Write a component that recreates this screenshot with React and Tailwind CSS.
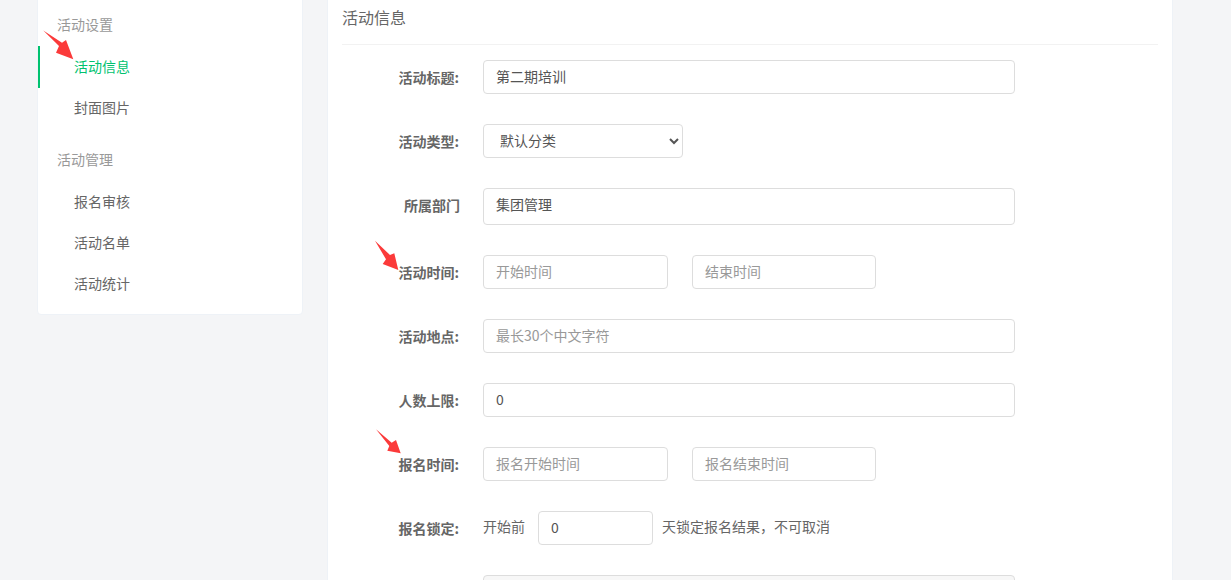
const font = { fontFamily: '"Noto Sans CJK SC", "Liberation Sans", sans-serif' };

const inputClass =
  'h-[34px] rounded border border-[#dddddd] bg-white px-3 pb-[2px] text-sm text-[#555555] placeholder:text-[#999999] outline-none';

function Row({ label, children, className = 'mb-[30px]', labelClass = 'pb-[1px] pr-[1px]' }) {
  return (
    <div className={`flex items-center ${className}`}>
      <label className={`w-[118px] shrink-0 text-right text-sm font-bold text-[#666666] ${labelClass}`}>{label}</label>
      <div className="ml-[23px] flex items-center">{children}</div>
    </div>
  );
}

function SideGroup({ title, items, active }) {
  return (
    <div className="mb-[12px] last:mb-[10px]">
      <div className="flex h-[41px] items-center pb-[4px] pl-[19px] text-sm text-[#999999]">{title}</div>
      {items.map((item) => (
        <div
          key={item}
          className={
            item === active
              ? '-mb-[1px] flex h-[42px] items-center border-l-2 border-[#00c26f] pb-[2px] pl-[34px] text-sm text-[#00c26f]'
              : 'flex h-[41px] items-center pb-[2px] pl-[36px] text-sm text-[#666666]'
          }
        >
          {item}
        </div>
      ))}
    </div>
  );
}

export default function App() {
  return (
    <div className="relative h-[580px] overflow-hidden bg-[#f4f5f7]" style={font}>
      <div className="flex items-start pl-[37px]">
        <aside className="-mt-[6px] w-[266px] shrink-0 rounded-sm border border-[#eef2f7] bg-white pt-[10px]">
          <SideGroup title="活动设置" items={['活动信息', '封面图片']} active="活动信息" />
          <SideGroup title="活动管理" items={['报名审核', '活动名单', '活动统计']} />
        </aside>

        <main className="ml-[24px] -mt-[10px] w-[846px] shrink-0 border border-[#eef2f7] bg-white px-[14px]">
          <div className="flex h-[54px] items-end border-b border-[#f2f2f2] pb-[16px] text-base leading-[22px] text-[#666666]">
            活动信息
          </div>

          <form className="pt-[15px]">
            <Row label="活动标题:">
              <input className={`${inputClass} w-[532px]`} defaultValue="第二期培训" />
            </Row>
            <Row label="活动类型:">
              <select className={`${inputClass} w-[200px]`} defaultValue="默认分类">
                <option>默认分类</option>
              </select>
            </Row>
            <Row label="所属部门" labelClass="pb-[4px]">
              <input className={`${inputClass} h-[37px] w-[532px] pb-[5px]`} defaultValue="集团管理" />
            </Row>
            <Row label="活动时间:">
              <input className={`${inputClass} w-[185px]`} placeholder="开始时间" />
              <input className={`${inputClass} ml-[24px] w-[184px]`} placeholder="结束时间" />
            </Row>
            <Row label="活动地点:">
              <input className={`${inputClass} w-[532px]`} placeholder="最长30个中文字符" />
            </Row>
            <Row label="人数上限:">
              <input className={`${inputClass} w-[532px]`} defaultValue="0" />
            </Row>
            <Row label="报名时间:">
              <input className={`${inputClass} w-[185px]`} placeholder="报名开始时间" />
              <input className={`${inputClass} ml-[24px] w-[184px]`} placeholder="报名结束时间" />
            </Row>
            <Row label="报名锁定:">
              <span className="-mt-[4px] text-sm text-[#666666]">开始前</span>
              <input className={`${inputClass} ml-[13px] mr-[9px] w-[115px]`} defaultValue="0" />
              <span className="-mt-[4px] text-sm text-[#666666]">天锁定报名结果，不可取消</span>
            </Row>
            <div className="ml-[141px] h-[60px] w-[532px] rounded border border-[#dddddd] bg-[#f7f7f7]" />
          </form>
        </main>
      </div>

      {/* annotation arrows drawn over the screenshot */}
      <svg className="pointer-events-none absolute inset-0" width="1231" height="580">
        <polygon points="43.3,30.6 62,42.7 66,40 73.3,59.3 56,52.7 59,46" fill="#fb3a3a" />
        <polygon points="375,240.7 390,255 394.3,253.3 398.3,270 382.7,264 386,259.3" fill="#fb3a3a" />
        <polygon points="376,429.3 391.7,442.7 396,440 400.7,453.3 387.3,450.7 389.3,446" fill="#fb3a3a" />
      </svg>
    </div>
  );
}
